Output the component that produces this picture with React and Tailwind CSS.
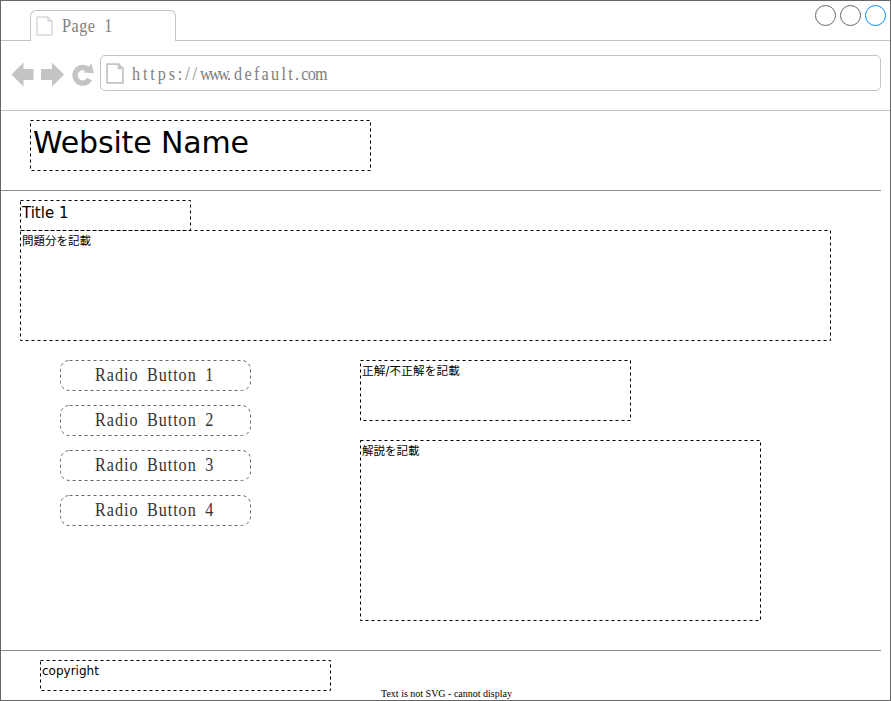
const serif = "font-['Liberation_Serif',serif]";
const sans = "font-['DejaVu_Sans','Noto_Sans_CJK_JP',sans-serif]";
const narrow = 'inline-block origin-left scale-x-[0.85] whitespace-nowrap';

function Outline({ radius = 0, stroke = '#000000' }) {
  return (
    <svg className="pointer-events-none absolute inset-0 h-full w-full overflow-visible" aria-hidden="true">
      <rect
        x="0.5"
        y="0.5"
        rx={radius}
        className="h-[calc(100%-1px)] w-[calc(100%-1px)]"
        fill="none"
        stroke={stroke}
        strokeDasharray="3 3"
      />
    </svg>
  );
}

function DashedBox({ className, children }) {
  return (
    <div className={`relative shrink-0 whitespace-nowrap text-black ${sans} ${className}`}>
      <Outline />
      {children}
    </div>
  );
}

function PageIcon({ className, width }) {
  return (
    <svg viewBox="0 0 17 20" className={className} fill="none" stroke="#c4c4c4" strokeWidth={width} aria-hidden="true">
      <path d="M1 1H12L16 5V19H1Z M12 1V5H16" />
    </svg>
  );
}

function Tabs() {
  return (
    <div className="flex h-[40px] items-end">
      <div className="h-px w-[29px] bg-[#c4c4c4]" />
      <div className="flex h-[31px] w-[146px] items-center rounded-t-[6px] border-x border-t border-[#c4c4c4] pl-[5px]">
        <PageIcon className="h-[20px] w-[17px]" width={1} />
        <span className={`ml-[9px] text-[19px] leading-5 tracking-[0.6px] [word-spacing:5px] text-[#808080] ${narrow} ${serif}`}>
          Page 1
        </span>
      </div>
      <div className="flex h-full flex-1 flex-col items-end justify-between">
        <div className="mt-[4px] mr-[4px] flex gap-[4px]">
          <div className="size-[21px] rounded-full border border-[#666666]" />
          <div className="size-[21px] rounded-full border border-[#666666]" />
          <div className="size-[21px] rounded-full border border-[#008cff]" />
        </div>
        <div className="h-px w-full bg-[#c4c4c4]" />
      </div>
    </div>
  );
}

function AddressBar() {
  return (
    <div className="flex h-[70px] items-start border-b border-[#c4c4c4] pt-[14px] pl-[10px]">
      <svg viewBox="0 0 88 36" className="h-[36px] w-[88px]" fill="#c4c4c4" aria-hidden="true">
        <path d="M0.5 19.5L12.5 7.5V14H22.5V25H12.5V31.5Z" />
        <path d="M53 19.5L41 7.5V14H30V25H41V31.5Z" />
        <path d="M77.2 14.6A7.8 7.8 0 1 0 78.6 24.2" fill="none" stroke="#c4c4c4" strokeWidth="5.4" />
        <path d="M80.7 8.5L82.7 18.3L72.5 17.6Z" />
      </svg>
      <div className="ml-px flex h-[36px] w-[781px] items-center rounded-[5px] border border-[#c4c4c4] pl-[5px]">
        <PageIcon className="h-[21px] w-[18px]" width={1.7} />
        <span className={`mt-px ml-[8px] text-[19px] leading-5 text-[#808080] ${narrow} ${serif}`}>
          <span className="tracking-[3.4px]">https://</span>
          <span className="tracking-[-3.1px]">www</span>
          <span className="tracking-[3.5px]">.</span>
          <span className="tracking-[2.7px]">default.</span>
          <span className="tracking-[-0.9px]">com</span>
        </span>
      </div>
    </div>
  );
}

const choices = ['Radio Button 1', 'Radio Button 2', 'Radio Button 3', 'Radio Button 4'];

export default function App() {
  return (
    <div className="relative flex h-[701px] w-[891px] flex-col overflow-hidden border border-[#666666] bg-white">
      <Tabs />
      <AddressBar />
      <header className="mr-[9px] h-[80px] border-b border-[#8c8c8c] pt-[9px] pl-[29px]">
        <DashedBox className="h-[51px] w-[341px] pt-[5px] pl-[3px] text-[30px] leading-[36px] tracking-[-0.15px]">
          Website Name
        </DashedBox>
      </header>
      <main className="mr-[9px] h-[460px] border-b border-[#8c8c8c] pt-[9px] pl-[19px]">
        <DashedBox className="h-[31px] w-[171px] pt-[3px] pl-[2px] text-[15px] leading-5">Title 1</DashedBox>
        <DashedBox className="-mt-px h-[111px] w-[811px] pt-px pl-[2px] text-[11.5px] leading-5">
          問題分を記載
        </DashedBox>
        <div className="mt-[19px] flex pl-[40px]">
          <div className="flex w-[191px] flex-col gap-[14px]">
            {choices.map((choice) => (
              <div key={choice} className={`relative h-[31px] pl-[35px] text-[19px] leading-[30px] text-[#333333] ${serif}`}>
                <Outline radius={9} stroke="#666666" />
                <span className={`tracking-[1.15px] [word-spacing:4px] ${narrow}`}>{choice}</span>
              </div>
            ))}
          </div>
          <div className="ml-[109px] flex flex-col gap-[19px]">
            <DashedBox className="h-[61px] w-[271px] pt-px pl-[2px] text-[11.6px] leading-5 tracking-[0.15px]">
              正解/不正解を記載
            </DashedBox>
            <DashedBox className="h-[181px] w-[401px] pt-px pl-[2px] text-[11.5px] leading-5">
              解説を記載
            </DashedBox>
          </div>
        </div>
      </main>
      <footer className="flex flex-1 items-start pt-[9px] pl-[39px]">
        <DashedBox className="h-[31px] w-[291px] pt-px pl-[2px] text-[12px] leading-5">copyright</DashedBox>
        <span className={`mt-[28px] ml-[50px] text-[10px] leading-3 whitespace-nowrap text-black ${serif}`}>
          Text is not SVG - cannot display
        </span>
      </footer>
    </div>
  );
}
